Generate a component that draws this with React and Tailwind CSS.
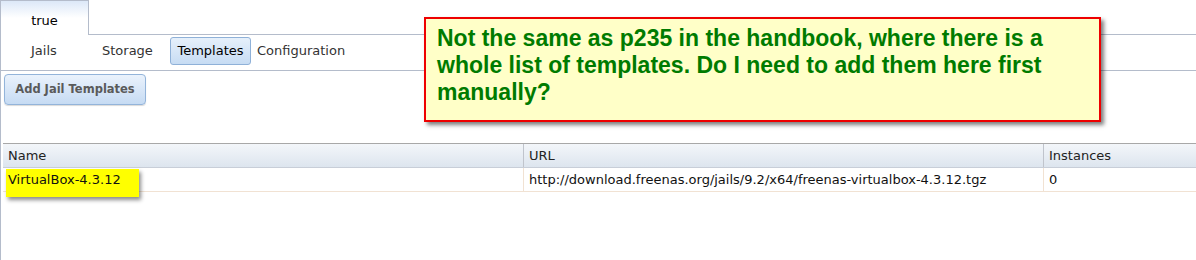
import React from 'react';

const ui = { fontFamily: '"DejaVu Sans", Verdana, sans-serif' };
const note = { fontFamily: '"Liberation Sans", Arial, sans-serif' };

const rows = [
  {
    name: 'VirtualBox-4.3.12',
    url: 'http://download.freenas.org/jails/9.2/x64/freenas-virtualbox-4.3.12.tgz',
    instances: '0',
  },
];

const App = () => {
  return (
    <div className="relative w-[1196px] h-[260px] overflow-hidden bg-white text-[13px] text-[#222]" style={ui}>
      <div className="h-full border-l border-[#b4bccb]">
        {/* top tab */}
        <div className="flex h-[35px]">
          <div className="w-[88px] h-full border-t border-r border-[#b4bccb] bg-gradient-to-b from-[#dce8f8] via-white to-white flex items-center justify-center pt-[5px] text-[13px] text-black">
            true
          </div>
          <div className="flex-1 border-b border-[#b4bccb]" />
        </div>

        {/* sub tabs */}
        <div className="flex items-start pt-[2px] h-[36px] border-b border-[#b4bccb] text-[13px] text-[#333]">
          <span className="ml-[30px] w-[71px] leading-[28px]">Jails</span>
          <span className="w-[68px] leading-[28px]">Storage</span>
          <button className="w-[81px] h-[28px] rounded-[3px] border border-[#8fb1d8] bg-gradient-to-b from-[#e6f0fb] to-[#c7dcf3] text-black">
            Templates
          </button>
          <span className="ml-[6px] leading-[28px]">Configuration</span>
        </div>

        {/* toolbar */}
        <div className="pt-[3px] pl-[3px]">
          <button className="w-[142px] h-[31px] rounded-[4px] border border-[#93b4da] bg-gradient-to-b from-[#eaf2fc] to-[#c6dbf3] text-[11.5px] font-bold text-[#5a5a5a] shadow-[0_1px_1px_rgba(0,0,0,0.15)]">
            Add Jail Templates
          </button>
        </div>

        {/* grid */}
        <div className="mt-[38px] ml-[2px]">
          <div className="flex h-[25px] border-t border-b border-t-[#a8a8a8] border-b-[#c8ced8] bg-gradient-to-b from-[#f3f6fa] to-[#dde5ee] text-[#222]">
            <div className="w-[520px] pl-[5px] flex items-center">Name</div>
            <div className="w-[520px] pl-[5px] flex items-center border-l border-[#c0c4cc]">URL</div>
            <div className="flex-1 pl-[5px] flex items-center border-l border-[#c0c4cc]">Instances</div>
          </div>
          {rows.map((r) => (
            <div key={r.name} className="flex h-[24px] border-b border-[#f1e2d3] text-[#111]">
              <div className="relative w-[520px] pl-[5px] flex items-center">
                <div className="absolute left-[3px] top-px w-[133px] h-[28px] bg-[#ffff00] shadow-[2px_3px_4px_rgba(0,0,0,0.45)]" />
                <span className="relative">{r.name}</span>
              </div>
              <div className="w-[520px] pl-[5px] flex items-center border-l border-[#f1e2d3]">{r.url}</div>
              <div className="flex-1 pl-[5px] flex items-center border-l border-[#f1e2d3]">{r.instances}</div>
            </div>
          ))}
        </div>
      </div>

      {/* callout annotation */}
      <div
        className="absolute left-[424px] top-[17px] w-[677px] h-[105px] border-2 border-[#ee0000] bg-[#ffffc8] shadow-[3px_3px_4px_rgba(0,0,0,0.5)] pl-[11px] pt-[6px] text-[23px] leading-[27px] font-bold text-[#007b00]"
        style={note}
      >
        Not the same as p235 in the handbook, where there is a<br />
        whole list of templates. Do I need to add them here first<br />
        manually?
      </div>
    </div>
  );
};

export default App;
